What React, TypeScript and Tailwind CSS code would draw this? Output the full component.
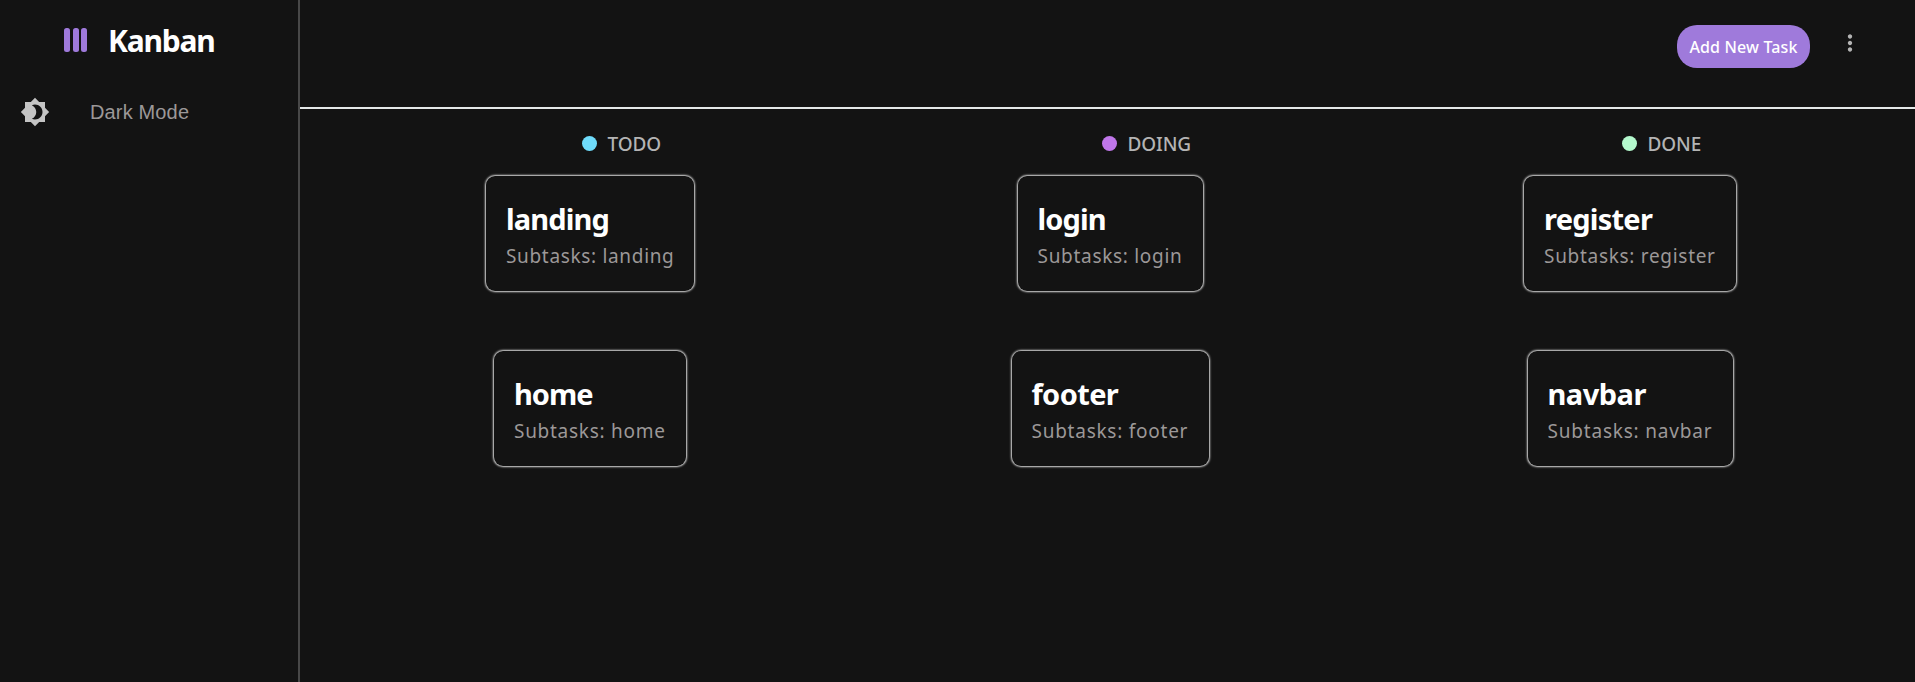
import type { ReactNode } from "react";
import { MdBrightness4, MdMoreVert } from "react-icons/md";

type Task = { text: string; title: string; sub: string };
type Column = { name: string; dot: string; cards: Task[] };

const columns: Column[] = [
  {
    name: "TODO",
    dot: "bg-[#6fdcfb]",
    cards: [
      { text: "landing", title: "tracking-[-0.85px]", sub: "w-[168px] tracking-[0.67px]" },
      { text: "home", title: "tracking-[-1px]", sub: "w-[152px] tracking-[0.72px]" },
    ],
  },
  {
    name: "DOING",
    dot: "bg-[#c077ea]",
    cards: [
      { text: "login", title: "tracking-[-0.9px]", sub: "w-[145px] tracking-[0.7px]" },
      { text: "footer", title: "tracking-[-0.6px]", sub: "w-[157px] tracking-[0.75px]" },
    ],
  },
  {
    name: "DONE",
    dot: "bg-[#b4f9cd]",
    cards: [
      { text: "register", title: "tracking-[-0.75px]", sub: "w-[172px] tracking-[0.7px]" },
      { text: "navbar", title: "tracking-[-0.5px]", sub: "w-[165px] tracking-[0.8px]" },
    ],
  },
];

function Line({ className, children }: { className: string; children: ReactNode }) {
  return <div className={`whitespace-nowrap ${className}`}>{children}</div>;
}

function Logo() {
  return (
    <svg width="24" height="24" viewBox="0 0 24 24" fill="#9f7adb">
      <rect x="0" y="0" width="6" height="24" rx="2.5" />
      <rect x="9" y="0" width="6" height="24" rx="2.5" />
      <rect x="17" y="0" width="6" height="24" rx="2.5" />
    </svg>
  );
}

export default function App() {
  return (
    <div className="flex h-[682px] w-full overflow-hidden bg-[#131313] font-['Noto_Sans',sans-serif]">
      <aside className="w-[300px] shrink-0 border-r-2 border-[#484848]">
        <div className="flex h-[57px] pt-[28px] pl-[64px]">
          <Logo />
          <Line className="-mt-[3px] ml-[20px] text-[30px] leading-[32px] font-bold tracking-[-1.2px] text-white">Kanban</Line>
        </div>
        <div className="mt-[40px] flex items-center pl-[20px] text-[#c4c4c4]">
          <MdBrightness4 size={30} />
          <Line className="ml-[40px] font-['Liberation_Sans',sans-serif] text-[20px] leading-[30px] tracking-[0.15px] text-[#9c9898]">
            Dark Mode
          </Line>
        </div>
      </aside>
      <div className="flex min-w-0 grow flex-col">
        <header className="flex h-[109px] shrink-0 justify-end border-b-2 border-[#e4e8e8] pt-[25px] pr-[52px]">
          <button className="h-[43px] w-[133px] rounded-[20px] bg-[#9f7adb] text-[16px] font-medium tracking-[0.15px] whitespace-nowrap text-white">
            Add New Task
          </button>
          <MdMoreVert size={26} className="mt-[5px] ml-[27px] text-[#b4b4b4]" />
        </header>
        <main className="flex grow justify-between pr-[25px] pl-[30px]">
          {columns.map((c) => (
            <section key={c.name} className="flex w-[520px] flex-col items-center">
              <div className="grid h-[67px] w-full grid-cols-[1fr_15px_1fr] items-center gap-[11px] pt-[2px] pr-[2px]">
                <span className={`col-start-2 size-[15px] rounded-full ${c.dot}`} />
                <Line className="text-[19px] leading-[24px] font-medium tracking-[-0.1px] text-[#b4b4b4]">{c.name}</Line>
              </div>
              <div className="flex flex-col items-center gap-[60px]">
                {c.cards.map((t) => (
                  <article key={t.text} className="h-[115px] rounded-[9px] bg-[#131313] px-[20px] pt-[26px] shadow-[0_0_2px_1px_#ddd]">
                    <Line className={`text-[29px] leading-[34px] font-bold text-white ${t.title}`}>{t.text}</Line>
                    <Line className={`mt-[7px] text-[19px] leading-[26px] text-[#9c9898] ${t.sub}`}>Subtasks: {t.text}</Line>
                  </article>
                ))}
              </div>
            </section>
          ))}
        </main>
      </div>
    </div>
  );
}
